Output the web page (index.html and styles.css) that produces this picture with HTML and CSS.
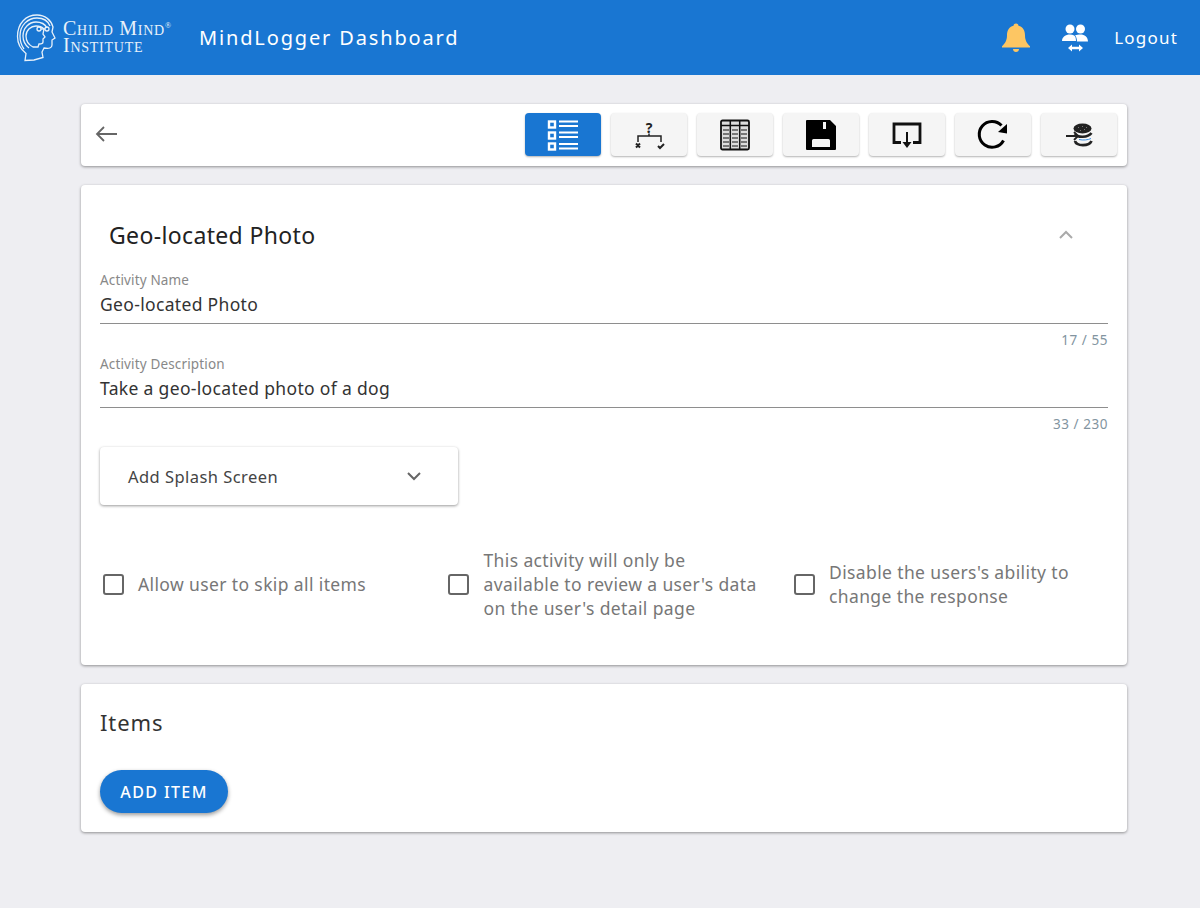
FILE: index.html
```html
<!DOCTYPE html>
<html lang="en">
<head>
<meta charset="utf-8">
<title>MindLogger Dashboard</title>
<link rel="stylesheet" href="styles.css">
</head>
<body>
<header class="appbar">
  <div class="brand">
    <svg class="brand-mark" viewBox="0 0 40 50" width="40" height="50" fill="none" stroke="#e8f1fa" stroke-width="1.300">
      <path d="M9 47.500l1-7c-5-4-8.500-9-8.500-17C1.500 10 10 2 21 2c8 0 14 5 16 12l-1 5 3 6-3 2v5c0 3-3 4-8 3l-2 4 1 5.500-9 2.500z"/>
      <path d="M8 36c-3-4-4-8-4-13C4 12 12 5 21 5c6 0 11 3 13 8"/>
      <path d="M13 35c-4-3-6-7-6-12C7 15 13 9 20 9c5 0 9 2 11 6"/>
      <path d="M17 34c-4-2-7-6-7-11 0-6 5-10 10-10 3 0 6 1 8 3l-1 5 2 3-2 2v3c0 2-2 2-4 2l-1 3z"/>
      <circle cx="23" cy="16" r="2"/><circle cx="31" cy="16" r="2"/><path d="M25 16h4"/>
    </svg>
    <div class="brand-name">
      <span class="brand-line">Child Mind<span class="reg">®</span></span>
      <span class="brand-line">Institute</span>
    </div>
  </div>
  <h1 class="app-title">MindLogger Dashboard</h1>
  <div class="appbar-actions">
    <svg class="bell" viewBox="0 0 32 32" width="32" height="32"><path fill="#fdc663" d="M16 1.500c1.400 0 2.300.9 2.500 2.200 4.600 1.100 6.500 5 6.500 9.500 0 5.500 2 8 5 11v1.300H2V24.200c3-3 5-5.500 5-11 0-4.500 1.900-8.400 6.500-9.500.2-1.300 1.100-2.200 2.500-2.200z"/><path fill="#fdc663" d="M13 27h6c0 1.700-1.300 3-3 3s-3-1.300-3-3z"/></svg>
    <svg class="people" viewBox="0 0 28 30" width="28" height="30" fill="#fff"><circle cx="9" cy="6" r="4.500"/><circle cx="19.500" cy="6" r="4.500"/><path d="M1 18c0-4 3.500-6.500 8-6.500 1.500 0 3 .3 4.200 1 1 .6 1.800 2.500 1.800 5.500H1z"/><path d="M16 18.500c0-2.500-.7-4.800-2-6 1.500-.7 3.500-1 5.500-1 4 0 7.500 2.500 7.500 7h-11z"/><path d="M7 25l4-3.500v2.300h7v-2.300l4 3.500-4 3.500v-2.300h-7v2.300z"/></svg>
    <span class="logout">Logout</span>
  </div>
</header>

<main class="page">
  <section class="card toolbar">
    <svg class="back" viewBox="0 0 24 24" width="24" height="24"><path fill="none" stroke="#666" stroke-width="1.800" d="M23 12H3M10 5l-7 7 7 7"/></svg>
    <div class="tools">
      <button class="tool tool-active" aria-label="Items">
        <svg viewBox="0 0 32 32" width="32" height="32" fill="none" stroke="#fff"><g stroke-width="2.400"><rect x="2" y="2.500" width="6" height="6"/><rect x="2" y="13.500" width="6" height="6"/><rect x="2" y="24.500" width="6" height="6"/></g><g stroke-width="2"><path d="M12 2.500h19M12 7h19M12 13.500h19M12 18h19M12 25h19M12 29.500h19"/></g></svg>
      </button>
      <button class="tool" aria-label="Conditional">
        <svg class="branch" viewBox="0 0 32 32" width="32" height="32" fill="none" stroke="#222"><text class="q" x="16" y="14" text-anchor="middle">?</text><path stroke-width="1.500" d="M16 14.500v2.500M5 23v-6h23v6"/><path stroke-width="2" d="M3 24.500l4 4M7 24.500l-4 4M25 27l2 2 4-4"/></svg>
      </button>
      <button class="tool" aria-label="Table">
        <svg viewBox="0 0 30 32" width="30" height="32" fill="none"><rect x="1" y="1.500" width="28" height="29" rx="1.500" fill="#ddd" stroke="#111" stroke-width="1.800"/><path stroke="#111" stroke-width="1.500" d="M10.300 2v28M19.700 2v28M1 6.500h28"/><path stroke="#555" stroke-width="1.300" d="M3 11h6M12 11h6M21 11h6M3 15h6M12 15h6M21 15h6M3 19h6M12 19h6M21 19h6M3 23h6M12 23h6M21 23h6M3 27h6M12 27h6M21 27h6"/></svg>
      </button>
      <button class="tool" aria-label="Save">
        <svg viewBox="0 0 30 30" width="30" height="30"><path fill="#000" fill-rule="evenodd" d="M1 0h23l6 6v23a1 1 0 0 1-1 1H1a1 1 0 0 1-1-1V1a1 1 0 0 1 1-1zM7.500 19a1.500 1.500 0 0 0-1.500 1.500V27h18v-6.500a1.500 1.500 0 0 0-1.500-1.500zM17 2v7h3V2z"/></svg>
      </button>
      <button class="tool" aria-label="Export">
        <svg viewBox="0 0 30 26" width="30" height="26" fill="none" stroke="#111"><path stroke-width="2.800" d="M9 20.500H2V2h26v18.500h-7"/><path stroke-width="2" d="M15 10v13"/><path fill="#111" stroke="none" d="M10.500 20h9L15 26z"/></svg>
      </button>
      <button class="tool" aria-label="Refresh">
        <svg viewBox="0 0 32 32" width="32" height="32" fill="none"><path stroke="#000" stroke-width="3" d="M26.500 21.500A12.900 12.900 0 1 1 24.500 6.500"/><path fill="#000" d="M30 5v9.500L21 13z"/></svg>
      </button>
      <button class="tool" aria-label="Data">
        <svg viewBox="0 0 28 24" width="28" height="24" fill="none"><ellipse cx="17.500" cy="5.500" rx="9" ry="5" fill="#222"/><path fill="#777" d="M13 4h1v1h-1zM17 3h1v1h-1zM21 4h1v1h-1zM15 7h1v1h-1zM19 6h1v1h-1z"/><path stroke="#222" stroke-width="2.600" d="M10 11c2 3.500 13 4 16.500-1"/><path stroke="#222" stroke-width="2.800" d="M10 18c1.500 5.500 14 5.500 16.500 0"/><path stroke="#222" stroke-width="1.800" d="M1 13h12M9 9l4 4-4 4"/><path stroke="#3d8fe0" stroke-width="1" d="M14 16.500c4 1 9 .5 12-1"/></svg>
      </button>
    </div>
  </section>

  <section class="card activity">
    <div class="activity-head">
      <h2 class="activity-title">Geo-located Photo</h2>
      <svg class="chevron" viewBox="0 0 24 24" width="24" height="24"><path fill="none" stroke="#aaa" stroke-width="2" d="M6 15l6-6 6 6"/></svg>
    </div>
    <div class="field">
      <label class="field-label">Activity Name</label>
      <div class="field-value">Geo-located Photo</div>
      <div class="counter">17 / 55</div>
    </div>
    <div class="field">
      <label class="field-label">Activity Description</label>
      <div class="field-value">Take a geo-located photo of a dog</div>
      <div class="counter">33 / 230</div>
    </div>
    <div class="splash">
      <span>Add Splash Screen</span>
      <svg viewBox="0 0 24 24" width="24" height="24"><path fill="none" stroke="#666" stroke-width="2" d="M6 9l6 6 6-6"/></svg>
    </div>
    <div class="options">
      <div class="option"><span class="box"></span><span class="option-text">Allow user to skip all items</span></div>
      <div class="option"><span class="box"></span><span class="option-text">This activity will only be available to review a user's data on the user's detail page</span></div>
      <div class="option"><span class="box"></span><span class="option-text">Disable the users's ability to change the response</span></div>
    </div>
  </section>

  <section class="card items">
    <h3 class="items-title">Items</h3>
    <button class="add-item">ADD ITEM</button>
  </section>
</main>
</body>
</html>
```

FILE: styles.css
```css
* { box-sizing: border-box; }
html, body { margin: 0; height: 100%; }
body {
  background: #eeeef2;
  font-family: "Noto Sans", Roboto, sans-serif;
  color: #333;
}
.appbar {
  height: 75px;
  background: #1976d2;
  color: #fff;
  display: flex;
  align-items: center;
  padding: 0 16px;
}
.brand { display: flex; align-items: center; width: 183px; height: 50px; }
.brand-mark { flex: none; }
.brand-name { margin: -2px 0 0 7px; font-family: "Liberation Serif", serif; color: #e8f1fa; font-size: 20px; line-height: 17px; font-variant: small-caps; letter-spacing: .75px; }
.brand-line { display: block; white-space: nowrap; }
.reg { font-size: 8px; line-height: 0; vertical-align: 7px; letter-spacing: 0; }
.app-title { margin: 0; font-size: 20px; font-weight: 400; letter-spacing: 1.85px; font-family: "Noto Sans", sans-serif; }
.appbar-actions { margin-left: auto; display: flex; align-items: center; padding-right: 6px; }
.bell { margin-right: 29px; }
.people { margin-right: 25px; }
.logout { font-size: 17px; letter-spacing: 1.2px; }

.page { width: 1046px; margin-left: 81px; padding-top: 29px; }
.card {
  background: #fff;
  border-radius: 4px;
  box-shadow: 0 1px 3px rgba(0,0,0,.4);
  margin-bottom: 19px;
}
.toolbar { height: 62px; display: flex; align-items: center; padding: 0 10px 0 13px; justify-content: space-between; }
.back { display: block; margin-top: -2px; }
.tools { display: flex; gap: 10px; margin-top: -1px; }
.tool {
  width: 76px; height: 43px; border: 0; padding: 0;
  background: #f5f5f5; border-radius: 4px;
  display: flex; align-items: center; justify-content: center;
  box-shadow: 0 1px 2px rgba(0,0,0,.3);
}
.tool-active { background: #1976d2; }
.branch { overflow: visible; }
.q { font: 700 14px "Noto Sans", sans-serif; fill: #222; stroke: none; }

.activity { height: 480px; padding: 0 19px; }
.activity-head { height: 86px; display: flex; align-items: center; justify-content: space-between; padding: 14px 30px 0 9px; }
.activity-title { margin: 0; font-size: 23px; font-weight: 400; color: #222; letter-spacing: .35px; }
.field { height: 84px; }
.field-label { display: block; font-size: 13.500px; line-height: 18px; height: 19px; color: #888; letter-spacing: .15px; }
.field-value { font-size: 17.500px; line-height: 24px; height: 34px; border-bottom: 1px solid #8e8e8e; padding-top: 2px; color: #333; letter-spacing: .33px; }
.counter { text-align: right; font-size: 13.500px; line-height: 16px; margin-top: 8px; color: #8294a0; letter-spacing: .55px; }
.splash {
  width: 358px; height: 58px; margin-top: 8px;
  border-radius: 4px; background: #fff;
  box-shadow: 0 1px 3px rgba(0,0,0,.4);
  display: flex; align-items: center; justify-content: space-between;
  padding: 0 32px 0 28px; font-size: 16.500px; color: #444; letter-spacing: .45px;
}
.options { display: grid; grid-template-columns: repeat(3, 345.500px); margin-top: 43px; height: 72px; }
.option { display: flex; align-items: center; font-size: 17.500px; line-height: 24px; color: #777; padding-left: 2.500px; letter-spacing: .38px; }
.box { flex: none; width: 21px; height: 21px; border: 2px solid #666; border-radius: 3px; margin-right: 14.500px; }
.option-text { max-width: 278px; }

.items { height: 148px; padding: 25px 19px 0; }
.items-title { margin: 0; font-size: 22px; font-weight: 400; line-height: 26px; color: #333; letter-spacing: .9px; }
.add-item {
  display: block; margin-top: 35px; width: 128px; height: 43px; border: 0; border-radius: 22px;
  background: #1976d2; color: #fff;
  font: 500 16px "Noto Sans", sans-serif; letter-spacing: 1.400px;
  box-shadow: 0 2px 4px rgba(0,0,0,.4);
}
```
